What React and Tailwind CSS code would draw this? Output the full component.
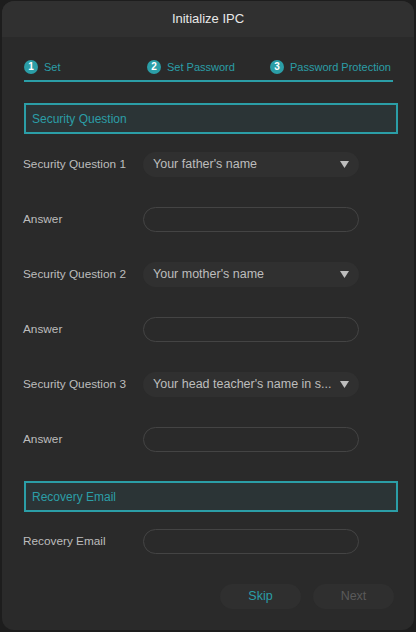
import { useState } from 'react';

const TEAL = 'text-[#2b9ea7]';

const questions = [
  { label: 'Security Question 1', value: "Your father's name" },
  { label: 'Security Question 2', value: "Your mother's name" },
  { label: 'Security Question 3', value: "Your head teacher's name in s..." },
];

function Step({ n, text }) {
  return (
    <div className="flex items-center gap-[6px] whitespace-nowrap">
      <span className="w-[14px] h-[14px] shrink-0 rounded-full bg-[#2b9ea7] text-white text-[10px] font-bold flex items-center justify-center leading-none">
        {n}
      </span>
      <span className={`${TEAL} text-[11px] leading-[18px]`}>{text}</span>
    </div>
  );
}

function SectionTitle({ children }) {
  return (
    <div className="h-[31px] -mr-[6px] border-2 border-[#2b9ea7] bg-[#2b3436] flex items-center px-[6px]">
      <span className={`${TEAL} text-[12px]`}>{children}</span>
    </div>
  );
}

function Row({ label, children }) {
  return (
    <div className="flex items-center h-[55px]">
      <div className="w-[120px] text-[11.8px] text-[#bdbdbd]">{label}</div>
      {children}
    </div>
  );
}

function Select({ value }) {
  return (
    <div className="w-[216px] h-[25px] rounded-full bg-[#303030] flex items-center justify-between pl-[10px] pr-[10px]">
      <span className="text-[12.5px] text-[#bdbdbd] truncate">{value}</span>
      <svg width="9" height="7" viewBox="0 0 9 7" className="shrink-0 ml-[4px]">
        <path d="M0 0 H9 L4.5 7 Z" fill="#bdbdbd" />
      </svg>
    </div>
  );
}

function Input() {
  const [val, setVal] = useState('');
  return (
    <input
      value={val}
      onChange={(e) => setVal(e.target.value)}
      className="w-[216px] h-[25px] rounded-full border border-[#444] bg-transparent outline-none px-[10px] text-[12px] text-[#ccc]"
    />
  );
}

export default function App() {
  return (
    <div className="w-[416px] h-[632px] bg-[#1d1d1d] pt-[1px] px-[2px] pb-[2px]" style={{ fontFamily: '"Liberation Sans", Arial, sans-serif' }}>
      <div className="h-full rounded-[12px] bg-[#2a2a2a] overflow-hidden flex flex-col">
        <div className="h-[36px] bg-[#303030] flex items-center justify-center text-[13px] text-[#e8e8e8]">
          Initialize IPC
        </div>

        <div className="px-[22px] pt-[21px]">
          <div className="w-[369px] grid grid-cols-[123px_123px_123px] pb-[4px] border-b-2 border-[#2b9ea7]">
            <Step n="1" text="Set" />
            <Step n="2" text="Set Password" />
            <Step n="3" text="Password Protection" />
          </div>

          <div className="mt-[21px]">
            <SectionTitle>Security Question</SectionTitle>
          </div>

          <div className="mt-[3px] -ml-[1px]">
            {questions.map((q) => (
              <div key={q.label}>
                <Row label={q.label}>
                  <Select value={q.value} />
                </Row>
                <Row label="Answer">
                  <Input />
                </Row>
              </div>
            ))}
          </div>

          <div className="mt-[14px]">
            <SectionTitle>Recovery Email</SectionTitle>
          </div>
          <div className="mt-[2px] -ml-[1px]">
            <Row label="Recovery Email">
              <Input />
            </Row>
          </div>

          <div className="flex justify-end gap-[12px] mt-[15px] -mr-[2px]">
            <button className="w-[81px] h-[25px] rounded-full bg-[#2f2f2f] text-[12.5px] text-[#2b9ea7]">Skip</button>
            <button className="w-[81px] h-[25px] rounded-full bg-[#2f2f2f] text-[12.5px] text-[#5a5a5a]">Next</button>
          </div>
        </div>
      </div>
    </div>
  );
}
